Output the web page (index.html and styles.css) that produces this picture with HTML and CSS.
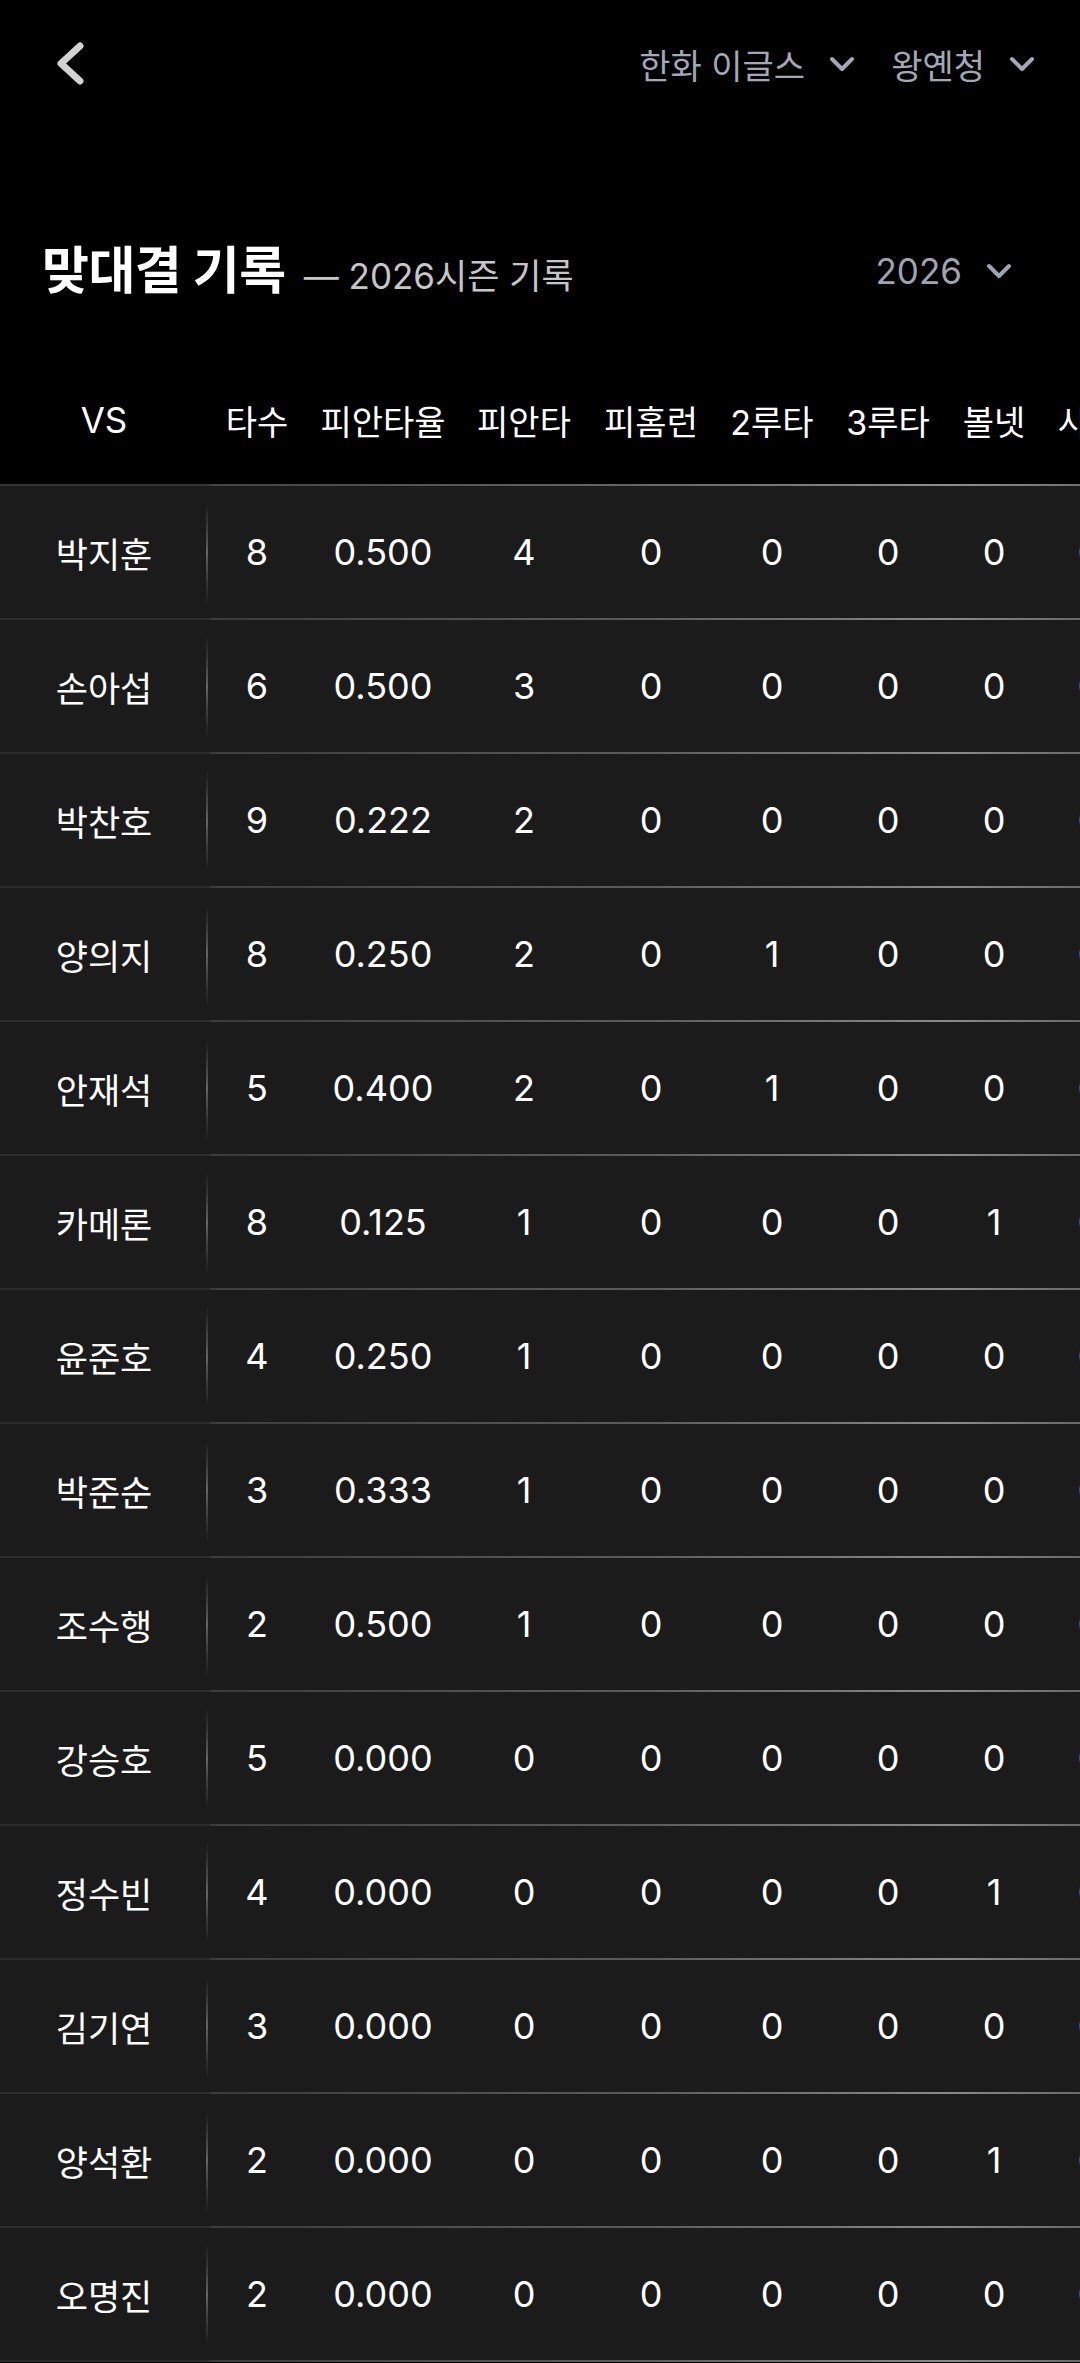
FILE: index.html
```html
<!DOCTYPE html>
<html lang="ko">
<head>
    <meta charset="UTF-8">
    <meta name="viewport" content="width=device-width, initial-scale=1.0">
    <title>맞대결 기록</title>
    <link rel="stylesheet" href="styles.css">
</head>
<body>
    <!-- Top bar -->
    <header class="topbar">
        <button class="back-btn" aria-label="뒤로">
            <svg width="30" height="44" viewBox="0 0 30 44"><polyline points="24,4 5,21.5 24,39" fill="none" stroke="#d2d2d2" stroke-width="7" stroke-linecap="round" stroke-linejoin="round"/></svg>
        </button>
        <div class="pickers">
            <div class="picker">한화 이글스
                <svg class="chev" width="26" height="16" viewBox="0 0 26 16"><polyline points="3,3 13,13 23,3" fill="none" stroke="currentColor" stroke-width="4" stroke-linecap="round" stroke-linejoin="round"/></svg>
            </div>
            <div class="picker">왕옌청
                <svg class="chev" width="26" height="16" viewBox="0 0 26 16"><polyline points="3,3 13,13 23,3" fill="none" stroke="currentColor" stroke-width="4" stroke-linecap="round" stroke-linejoin="round"/></svg>
            </div>
        </div>
    </header>

    <!-- Title -->
    <section class="title-row">
        <div class="title-wrap">
            <h1>맞대결 기록</h1>
            <span class="subtitle">— 2026시즌 기록</span>
        </div>
        <div class="picker year">2026
            <svg class="chev" width="26" height="16" viewBox="0 0 26 16"><polyline points="3,3 13,13 23,3" fill="none" stroke="currentColor" stroke-width="4" stroke-linecap="round" stroke-linejoin="round"/></svg>
        </div>
    </section>

    <!-- Stats table -->
    <div class="stats">
        <div class="row head">
            <div class="cell name">VS</div>
            <div class="cell c1">타수</div>
            <div class="cell c2">피안타율</div>
            <div class="cell c3">피안타</div>
            <div class="cell c4">피홈런</div>
            <div class="cell c5">2루타</div>
            <div class="cell c6">3루타</div>
            <div class="cell c7">볼넷</div>
            <div class="cell c8">사구</div>
        </div>
        <div id="rows"></div>
    </div>

    <script>
        // name, AB, AVG, H, HR, 2B, 3B, BB, HBP
        const records = [
            ['박지훈', 8, '0.500', 4, 0, 0, 0, 0, 0],
            ['손아섭', 6, '0.500', 3, 0, 0, 0, 0, 0],
            ['박찬호', 9, '0.222', 2, 0, 0, 0, 0, 0],
            ['양의지', 8, '0.250', 2, 0, 1, 0, 0, 0],
            ['안재석', 5, '0.400', 2, 0, 1, 0, 0, 0],
            ['카메론', 8, '0.125', 1, 0, 0, 0, 1, 0],
            ['윤준호', 4, '0.250', 1, 0, 0, 0, 0, 0],
            ['박준순', 3, '0.333', 1, 0, 0, 0, 0, 0],
            ['조수행', 2, '0.500', 1, 0, 0, 0, 0, 0],
            ['강승호', 5, '0.000', 0, 0, 0, 0, 0, 0],
            ['정수빈', 4, '0.000', 0, 0, 0, 0, 1, 0],
            ['김기연', 3, '0.000', 0, 0, 0, 0, 0, 0],
            ['양석환', 2, '0.000', 0, 0, 0, 0, 1, 0],
            ['오명진', 2, '0.000', 0, 0, 0, 0, 0, 0]
        ];

        const rows = document.getElementById('rows');
        records.forEach(rec => {
            const row = document.createElement('div');
            row.className = 'row';
            rec.forEach((val, i) => {
                const cell = document.createElement('div');
                cell.className = 'cell ' + (i === 0 ? 'name' : 'c' + i);
                cell.textContent = val;
                row.appendChild(cell);
            });
            rows.appendChild(row);
        });
    </script>
</body>
</html>
```

FILE: styles.css
```css
/* General */
body {
    margin: 0;
    padding: 0;
    background: #000;
    color: #fff;
    font-family: 'Inter', 'Noto Sans CJK KR', sans-serif;
    overflow: hidden;
}

/* Top bar */
.topbar {
    height: 128px;
    display: flex;
    align-items: center;
    justify-content: space-between;
    padding: 0 45px 0 56px;
}
.back-btn {
    background: none;
    border: 0;
    padding: 0;
    display: flex;
}
.pickers {
    display: flex;
    gap: 36px;
}
.picker {
    display: flex;
    align-items: center;
    gap: 24px;
    color: #a2a8b5;
    font-size: 34px;
}
.chev {
    display: block;
}

/* Title */
.title-row {
    margin-top: 103px;
    height: 80px;
    display: flex;
    align-items: center;
    justify-content: space-between;
    padding: 0 68px 0 42px;
}
.title-wrap {
    display: flex;
    align-items: baseline;
    gap: 18px;
    margin-bottom: 8px;
}
h1 {
    margin: 0;
    font-size: 51px;
    font-weight: 700;
    letter-spacing: -0.5px;
}
.subtitle {
    font-size: 35px;
    color: #c6c6c6;
}
.picker.year {
    font-size: 35px;
    color: #9ea4b0;
}

/* Table */
.stats {
    margin-top: 45px;
    width: 1080px;
    overflow: hidden;
}
.row {
    display: flex;
    height: 134px;
    box-sizing: border-box;
    background:
        linear-gradient(90deg, #2a2a2a 0, #2a2a2a 208px, #3c3c3c 212px, #5c5c5c 60%, #8a8a8a 88%, #6a6a6a 100%) left bottom / 100% 2px no-repeat,
        #1b1b1b;
}
.row.head {
    height: 130px;
    background:
        linear-gradient(90deg, #333 0, #333 208px, #444 212px, #666 60%, #8e8e8e 88%, #707070 100%) left bottom / 100% 2px no-repeat,
        #000;
}
.cell {
    flex: none;
    display: flex;
    align-items: center;
    justify-content: center;
    font-size: 36px;
    padding-bottom: 2px;
    box-sizing: border-box;
}
.head .cell {
    font-size: 34px;
}
.cell.name {
    width: 208px;
    font-size: 35px;
    background: linear-gradient(180deg, transparent 12%, #3a3a3a 30%, #626262 50%, #3a3a3a 70%, transparent 88%) right center / 2px 100% no-repeat;
}
.head .cell.name {
    background: none;
}
.c1 { width: 98px; }
.c2 { width: 154px; }
.c3 { width: 128px; }
.c4 { width: 126px; }
.c5 { width: 116px; }
.c6 { width: 116px; }
.c7 { width: 96px; }
.c8 { width: 94px; }
```
